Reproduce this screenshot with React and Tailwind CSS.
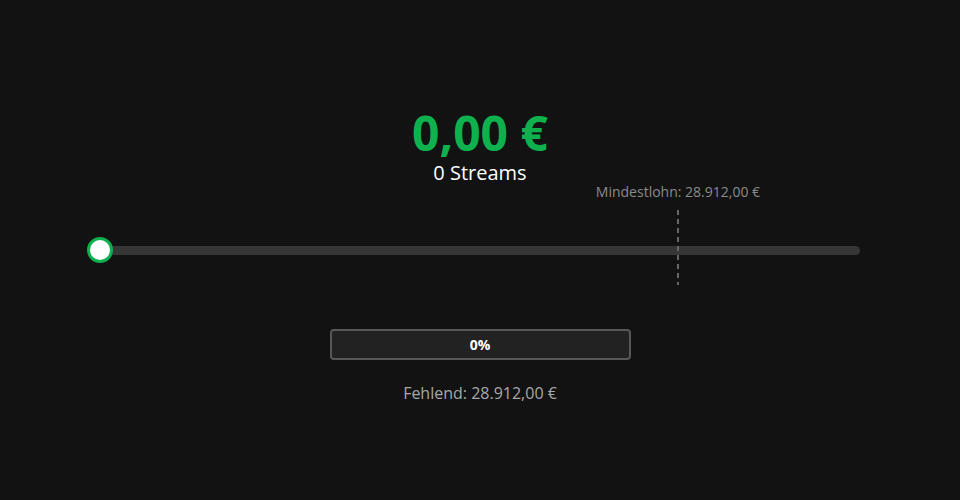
import { useState } from "react";

const MIN_WAGE = 28912;
const MARKER_PCT = 76.05;

const fmt = (n) =>
  n.toLocaleString("de-DE", { minimumFractionDigits: 2, maximumFractionDigits: 2 });

export default function App() {
  const [streams] = useState(0);
  const earned = 0;
  const pct = Math.min(100, Math.round((earned / MIN_WAGE) * 100));

  return (
    <div className="min-h-[500px] bg-[#121212] flex flex-col items-center font-['Open_Sans',sans-serif] text-white">
      {/* Earnings */}
      <div className="mt-[104px] flex flex-col items-center">
        <div className="text-[48px] leading-[57px] font-bold text-[#0fb14f]">{fmt(earned)} €</div>
        <div className="text-[20px] leading-[24px] text-white">{streams} Streams</div>
      </div>

      {/* Slider */}
      <div className="relative mt-[52px] w-[760px] h-[26px] flex items-center">
        <div className="w-full h-[9px] rounded-full bg-[#363636]" />
        <div
          className="absolute top-[-55px] -translate-x-1/2 whitespace-nowrap text-[14px] leading-[20px] text-[#8a8a8a]"
          style={{ left: `${MARKER_PCT}%` }}
        >
          Mindestlohn: {fmt(MIN_WAGE)} €
        </div>
        <div
          className="absolute top-[-27px] h-[75px] w-[2px] -translate-x-1/2 bg-[repeating-linear-gradient(to_bottom,#666_0_5px,transparent_5px_9px)]"
          style={{ left: `${MARKER_PCT}%` }}
        />
        <div className="absolute left-0 top-0 -translate-x-1/2 w-[26px] h-[26px] rounded-full bg-white border-[3px] border-[#0fb14f]" />
      </div>

      {/* Progress */}
      <div className="mt-[66px] w-[301px] h-[31px] rounded-[4px] border-2 border-[#575757] bg-[#222222] flex items-center justify-center">
        <span className="text-[14px] font-bold text-white">{pct}%</span>
      </div>

      <div className="mt-[21px] text-[16px] leading-[24px] text-[#a8a8a8]">
        Fehlend: {fmt(MIN_WAGE - earned)} €
      </div>
    </div>
  );
}
